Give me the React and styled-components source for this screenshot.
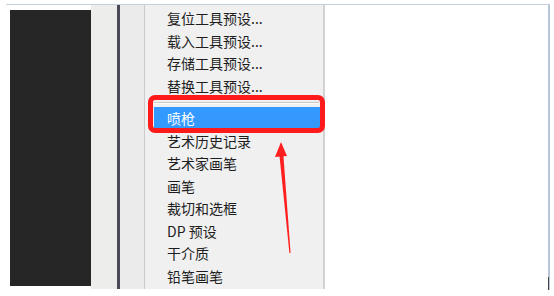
import React from 'react';
import styled, { createGlobalStyle } from 'styled-components';

const Global = createGlobalStyle`
  html, body { margin: 0; padding: 0; background: #ffffff; }
  body { font-family: "Microsoft YaHei", "Noto Sans CJK SC", "Noto Sans", sans-serif; }
`;

const Page = styled.div`
  position: relative;
  width: 554px;
  height: 296px;
  padding: 4px 0 0 6px;
  box-sizing: border-box;
  overflow: hidden;
  background: #ffffff;
`;

const Frame = styled.div`
  width: 544px;
  height: 286px;
  box-sizing: border-box;
  border-top: 1px solid #c6cfdf;
  border-right: 2px solid #b9c5d9;
  display: flex;
  align-items: flex-start;
  padding: 5px 0 0 4px;
`;

const DarkPanel = styled.div`
  width: 81px;
  height: 276px;
  background: #262626;
  flex: none;
`;

const Strip = styled.div`
  width: ${p => p.w}px;
  height: 284px;
  margin-top: -5px;
  background: ${p => p.bg};
  border-right: ${p => (p.edge ? `1px solid ${p.edge}` : 'none')};
  flex: none;
`;

const Menu = styled.div`
  width: 180px;
  height: 284px;
  margin-top: -5px;
  padding-top: 2px;
  box-sizing: border-box;
  background: #f0f0f0;
  border-right: 2px solid #d2d2d2;
  display: flex;
  flex-direction: column;
  flex: none;
`;

const Item = styled.div`
  flex: none;
  height: 22.5px;
  margin-left: 9px;
  margin-right: 2px;
  padding-left: 13px;
  display: flex;
  align-items: center;
  font-size: 14px;
  line-height: 1;
  white-space: nowrap;
  color: ${p => (p.active ? '#ffffff' : '#1e1e1e')};
  background: ${p => (p.active ? '#3399ff' : 'transparent')};
`;

const Separator = styled.div`
  flex: none;
  height: 10px;
  margin: 0 4px 0 9px;
  display: flex;
  align-items: center;
  &::after {
    content: '';
    flex: 1;
    height: 1px;
    background: #c9c9c9;
    box-shadow: 0 1px 0 #fbfbfb;
  }
`;

const Callout = styled.div`
  position: absolute;
  left: 148px;
  top: 95px;
  width: 177px;
  height: 38px;
  box-sizing: border-box;
  border: 5px solid #ff1b1b;
  border-radius: 7px;
  pointer-events: none;
`;

const Arrow = styled.svg`
  position: absolute;
  left: 0;
  top: 0;
  pointer-events: none;
`;

const Tick = styled.div`
  position: absolute;
  left: 548px;
  top: 277px;
  width: 1px;
  height: 13px;
  background: #444;
`;

const before = ['复位工具预设...', '载入工具预设...', '存储工具预设...', '替换工具预设...'];
const after = ['艺术历史记录', '艺术家画笔', '画笔', '裁切和选框', 'DP 预设', '干介质', '铅笔画笔'];

export default function App() {
  return (
    <Page>
      <Global />
      <Frame>
        <DarkPanel />
        <Strip w={26} bg="#ededec" />
        <Strip w={3} bg="#4b4957" />
        <Strip w={24} bg="#ebebeb" edge="#cbcbcb" />
        <Menu>
          {before.map(t => <Item key={t}>{t}</Item>)}
          <Separator />
          <Item active>喷枪</Item>
          {after.map(t => <Item key={t}>{t}</Item>)}
        </Menu>
      </Frame>
      <Callout />
      <Arrow width="554" height="296" viewBox="0 0 554 296">
        <polygon points="279.3,154 283.3,154 290.6,253 289.4,253" fill="#ff1f1f" />
        <polygon points="281,142 275,157 287,156" fill="#ff1f1f" />
      </Arrow>
      <Tick />
    </Page>
  );
}
